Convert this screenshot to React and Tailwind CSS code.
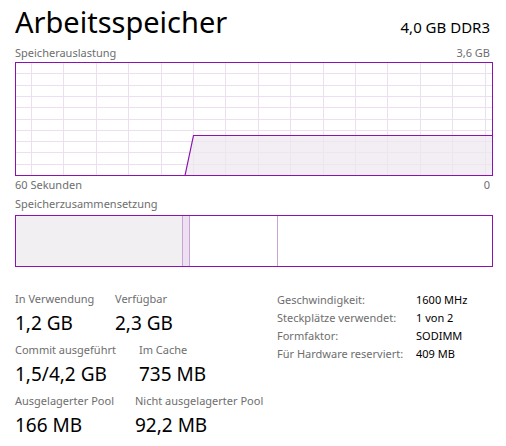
import React from 'react';

const PURPLE = '#8b12ae';

function UsageChart() {
  const w = 478;
  const h = 114;
  const cols = Array.from({ length: 15 }, (_, i) => 16 + i * 32.4);
  const rows = Array.from({ length: 9 }, (_, i) => (i + 1) * 11.3);
  return (
    <svg width={w} height={h} className="block">
      <rect x="0" y="0" width={w} height={h} fill="#ffffff" />
      {cols.map((x) => (
        <line key={'c' + x} x1={Math.round(x) + 0.5} y1="0" x2={Math.round(x) + 0.5} y2={h} stroke="#ecdff0" />
      ))}
      {rows.map((y) => (
        <line key={'r' + y} x1="0" y1={Math.round(y) + 0.5} x2={w} y2={Math.round(y) + 0.5} stroke="#ecdff0" />
      ))}
      <polygon points={`170,113 178.5,73.5 477,73.5 477,113`} fill="#ede8ef" fillOpacity="0.75" />
      <polyline points={`170,113.5 178.5,73.5 477,73.5`} fill="none" stroke={PURPLE} strokeWidth="1.2" />
      <rect x="0.5" y="0.5" width={w - 1} height={h - 1} fill="none" stroke={PURPLE} />
    </svg>
  );
}

function CompositionBar() {
  return (
    <div className="flex h-[52px] w-[478px] border border-[#8b12ae]">
      <div className="w-[166px] bg-[#f2eff3]" />
      <div className="w-[8px] border-x border-[#c9a3d8] bg-[#ede1f1]" />
      <div className="w-[87px]" />
      <div className="flex-1 border-l border-[#c9a3d8]" />
    </div>
  );
}

function Stat({ label, value, className = '' }) {
  return (
    <div className={className}>
      <div className="text-[11px] leading-[16px] text-[#6e6e6e]">{label}</div>
      <div className="mt-[5px] text-[19px] leading-[22px] text-black">{value}</div>
    </div>
  );
}

export default function App() {
  return (
    <div
      className="w-[506px] h-[446px] bg-white px-[15px] overflow-hidden"
      style={{ fontFamily: '"Noto Sans", "Open Sans", sans-serif' }}
    >
      <div className="flex items-end justify-between pt-[4px]">
        <h1 className="text-[29px] leading-[36px] text-black">Arbeitsspeicher</h1>
        <div className="text-[15px] leading-[22px] mb-[2px] text-black pr-[1px]">4,0 GB DDR3</div>
      </div>

      <div className="mt-[5px] flex justify-between text-[11px] leading-[16px] text-[#6e6e6e]">
        <span>Speicherauslastung</span>
        <span className="pr-[1px]">3,6 GB</span>
      </div>
      <div className="mt-[1px]">
        <UsageChart />
      </div>
      <div className="mt-[1px] flex justify-between text-[11px] leading-[16px] text-[#6e6e6e]">
        <span>60 Sekunden</span>
        <span className="pr-[1px]">0</span>
      </div>
      <div className="mt-[3px] text-[11px] leading-[16px] text-[#6e6e6e]">Speicherzusammensetzung</div>
      <div className="mt-[3px]">
        <CompositionBar />
      </div>

      <div className="mt-[24px] flex items-start">
        <div className="w-[262px] flex flex-col gap-[8px]">
          <div className="flex">
            <Stat className="w-[100px]" label="In Verwendung" value="1,2 GB" />
            <Stat label="Verfügbar" value="2,3 GB" />
          </div>
          <div className="flex">
            <Stat className="w-[124px]" label="Commit ausgeführt" value="1,5/4,2 GB" />
            <Stat label="Im Cache" value="735 MB" />
          </div>
          <div className="flex">
            <Stat className="w-[120px]" label="Ausgelagerter Pool" value="166 MB" />
            <Stat label="Nicht ausgelagerter Pool" value="92,2 MB" />
          </div>
        </div>
        <div className="grid grid-cols-[139px_1fr] content-start text-[11px] leading-[18px]">
          <span className="text-[#6e6e6e]">Geschwindigkeit:</span>
          <span className="text-black">1600 MHz</span>
          <span className="text-[#6e6e6e]">Steckplätze verwendet:</span>
          <span className="text-black">1 von 2</span>
          <span className="text-[#6e6e6e]">Formfaktor:</span>
          <span className="text-black">SODIMM</span>
          <span className="text-[#6e6e6e]">Für Hardware reserviert:</span>
          <span className="text-black">409 MB</span>
        </div>
      </div>
    </div>
  );
}
